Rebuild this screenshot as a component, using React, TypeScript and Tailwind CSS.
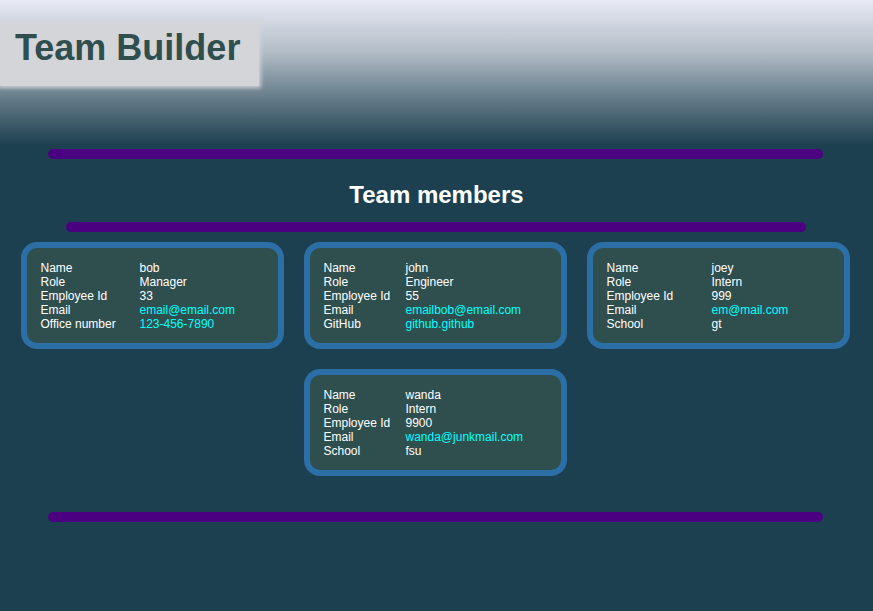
import React from "react";

type Member = {
    cols: number;
    rows: { label: string; value: string; link?: boolean }[];
};

const members: Member[] = [
    {
        cols: 99,
        rows: [
            { label: "Name", value: "bob" },
            { label: "Role", value: "Manager" },
            { label: "Employee Id", value: "33" },
            { label: "Email", value: "email@email.com", link: true },
            { label: "Office number", value: "123-456-7890", link: true },
        ],
    },
    {
        cols: 82,
        rows: [
            { label: "Name", value: "john" },
            { label: "Role", value: "Engineer" },
            { label: "Employee Id", value: "55" },
            { label: "Email", value: "emailbob@email.com", link: true },
            { label: "GitHub", value: "github.github", link: true },
        ],
    },
    {
        cols: 105,
        rows: [
            { label: "Name", value: "joey" },
            { label: "Role", value: "Intern" },
            { label: "Employee Id", value: "999" },
            { label: "Email", value: "em@mail.com", link: true },
            { label: "School", value: "gt" },
        ],
    },
    {
        cols: 82,
        rows: [
            { label: "Name", value: "wanda" },
            { label: "Role", value: "Intern" },
            { label: "Employee Id", value: "9900" },
            { label: "Email", value: "wanda@junkmail.com", link: true },
            { label: "School", value: "fsu" },
        ],
    },
];

function Bar({ className }: { className: string }) {
    return <div className={`h-[10px] rounded-full bg-[#4b0082] ${className}`} />;
}

function Card({ member }: { member: Member }) {
    return (
        <div className="m-[10px] h-[107px] w-[263px] rounded-[16px] border-[6px] border-[#2c6ea6] bg-[#2f4f4f] pl-[14px] pt-[13px]">
            {member.rows.map((r) => (
                <div key={r.label} className="flex text-[12px] leading-[14px] text-white">
                    <span style={{ width: member.cols }}>{r.label}</span>
                    <span className={r.link ? "text-[#00ffff]" : ""}>{r.value}</span>
                </div>
            ))}
        </div>
    );
}

export default function App() {
    return (
        <div className="min-h-[611px] bg-[#1c4050] font-['Liberation_Sans',Arial,sans-serif]">
            <header className="h-[145px] bg-gradient-to-b from-[#e8eaf5] via-[#b4bec8] via-35% to-[#1c4050] pt-[23px]">
                <div className="h-[63px] w-[259px] bg-[#d4d5d9] pl-[15px] pt-[5px] shadow-[0_0_4px_2px_rgba(212,213,217,0.9)]">
                    <h1 className="text-[36px] font-bold leading-[40px] text-[#2f4f4f]">
                        Team Builder
                    </h1>
                </div>
            </header>

            <Bar className="ml-[48px] mr-[50px] mt-[4px]" />

            <h2 className="mt-[20px] text-center text-[24px] font-bold leading-[32px] text-white">
                Team members
            </h2>

            <Bar className="ml-[66px] mr-[67px] mt-[11px]" />

            <div className="flex flex-wrap justify-center pr-[3px]">
                {members.map((m, i) => (
                    <Card key={i} member={m} />
                ))}
            </div>

            <Bar className="ml-[48px] mr-[50px] mt-[26px]" />
        </div>
    );
}
